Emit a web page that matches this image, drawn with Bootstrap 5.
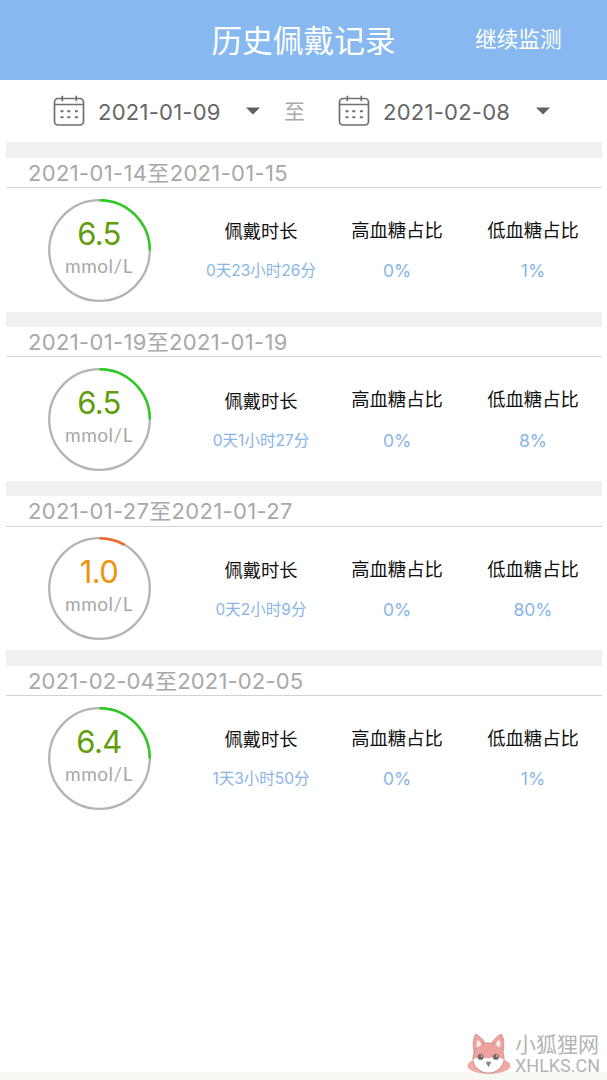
<!DOCTYPE html>
<html lang="zh-CN">
<head>
<meta charset="utf-8">
<meta name="viewport" content="width=device-width, initial-scale=1">
<title>历史佩戴记录</title>
<link href="https://cdn.jsdelivr.net/npm/bootstrap@5.3.0/dist/css/bootstrap.min.css" rel="stylesheet">
<style>
body{font-family:Inter,"Noto Sans CJK SC",sans-serif;background:#fff;min-height:1080px;line-height:1;overflow:hidden}
.topbar{height:80.3px;background:#87b9f0;color:#fff;padding:0}
.topbar h1{font-size:30.7px;line-height:40px;font-weight:400;margin:0;padding-top:1px;white-space:nowrap}
.side{width:211px}
.go-on{font-size:21.7px;line-height:30px;padding-left:79px;margin-top:-3px}
.filter{height:62.2px;color:#666;font-size:22px;padding-left:53px}
.filter svg{flex:none}
.date{line-height:30px;white-space:nowrap;letter-spacing:.25px;padding:2px 0 0 13px}
.to{color:#aaa;font-size:21px;line-height:30px;padding-top:2px}
.records{padding:0 5.5px 0 6px}
.band{height:15.3px;background:#f0f0f0}
.period{height:30.2px;line-height:31px;font-size:22px;color:#a8a8a8;border-bottom:1px solid #d2d2d2;padding-left:22px;white-space:nowrap;letter-spacing:.34px}
.period.wide{letter-spacing:.17px}
.detail{height:123.8px}
.gauge-col{width:187px;padding-left:42px;padding-top:10.8px}
.gauge{width:103px;height:103px}
.gauge svg{display:block}
.reading{top:0;left:0;width:102px;text-align:center}
.num{font-size:31px;line-height:36px;padding-top:17px;color:#619c0b;letter-spacing:-.6px}
.low{color:#ef920f}
.unit{font-size:19px;line-height:24px;margin-top:2px;color:#a8a8a8;font-family:Lato,sans-serif;letter-spacing:.5px}
.stat{width:136px;text-align:center;white-space:nowrap}
.stat dt{font-size:18.3px;line-height:26px;font-weight:400;color:#111;padding-top:29px}
.stat dd{font-size:17.5px;line-height:24px;color:#87b5e8;margin:16.5px 0 0}
.stat.wear dt{padding-top:30.5px}
.stat.wear dd{font-size:15.5px;margin-top:15px}
.foot{height:8px;background:#f7f7f3}
.site{left:467px;bottom:5px;color:#b4b4b4}
.site b{font-weight:400;display:block;white-space:nowrap}
.site-name{font-size:21px;line-height:22px}
.site-url{font-family:Roboto,sans-serif;font-size:18px;line-height:19px}
</style>
</head>
<body class="position-relative d-flex flex-column">
<svg width="0" height="0" class="position-absolute">
  <symbol id="cal" viewBox="0 0 32 32"><g fill="none" stroke="#707070" stroke-width="1.7"><rect x="1.5" y="3.500" width="29" height="26.500" rx="3.500"/><path d="M1.500 9.500h29M9.300.8v5.500M23.300.8v5.500"/><path d="M7.500 16.300h3M14.300 16.300h3M21.900 16.300h3M7.500 22.200h3M14.300 22.200h3M21.900 22.200h3" stroke-width="2"/></g></symbol>
  <symbol id="ring" viewBox="0 0 103 103"><circle cx="51.5" cy="51.5" r="50.3" fill="none" stroke="#b4b4b4" stroke-width="2.3"/></symbol>
</svg>
<header class="topbar navbar flex-nowrap justify-content-between">
  <div class="side flex-shrink-1"></div>
  <h1>历史佩戴记录</h1>
  <div class="side flex-shrink-0"><div class="go-on">继续监测</div></div>
</header>
<div class="filter d-flex align-items-center">
  <svg width="32" height="32"><use href="#cal"/></svg>
  <span class="date" style="width:149px">2021-01-09</span>
  <svg width="14" height="8" style="margin-left:12px"><path d="M0 .5h14L7 7.5z" fill="#606060"/></svg>
  <span class="to" style="width:54px;margin-left:24px">至</span>
  <svg width="32" height="32"><use href="#cal"/></svg>
  <span class="date" style="width:153px">2021-02-08</span>
  <svg width="14" height="8" style="margin-left:13px"><path d="M0 .5h14L7 7.5z" fill="#606060"/></svg>
</div>
<main class="records flex-grow-1">
  <section>
    <div class="band"></div><div class="period">2021-01-14至2021-01-15</div>
    <div class="detail d-flex">
      <div class="gauge-col"><div class="gauge position-relative"><svg width="103" height="103"><use href="#ring"/><path d="M51.5 1.2A50.3 50.3 0 0 1 101.8 51.5" fill="none" stroke="#2ccb22" stroke-width="2.4"/></svg><div class="reading position-absolute"><div class="num">6.5</div><div class="unit">mmol/L</div></div></div></div>
      <dl class="stat wear mb-0"><dt>佩戴时长</dt><dd>0天23小时26分</dd></dl>
      <dl class="stat mb-0"><dt>高血糖占比</dt><dd>0%</dd></dl>
      <dl class="stat mb-0"><dt>低血糖占比</dt><dd>1%</dd></dl>
    </div>
  </section>
  <section>
    <div class="band"></div><div class="period">2021-01-19至2021-01-19</div>
    <div class="detail d-flex">
      <div class="gauge-col"><div class="gauge position-relative"><svg width="103" height="103"><use href="#ring"/><path d="M51.5 1.2A50.3 50.3 0 0 1 101.8 51.5" fill="none" stroke="#2ccb22" stroke-width="2.4"/></svg><div class="reading position-absolute"><div class="num">6.5</div><div class="unit">mmol/L</div></div></div></div>
      <dl class="stat wear mb-0"><dt>佩戴时长</dt><dd>0天1小时27分</dd></dl>
      <dl class="stat mb-0"><dt>高血糖占比</dt><dd>0%</dd></dl>
      <dl class="stat mb-0"><dt>低血糖占比</dt><dd>8%</dd></dl>
    </div>
  </section>
  <section>
    <div class="band"></div><div class="period">2021-01-27至2021-01-27</div>
    <div class="detail d-flex">
      <div class="gauge-col"><div class="gauge position-relative"><svg width="103" height="103"><use href="#ring"/><path d="M51.5 1.2A50.3 50.3 0 0 1 76.6 7.9" fill="none" stroke="#f2692c" stroke-width="2.4"/></svg><div class="reading position-absolute"><div class="num low">1.0</div><div class="unit">mmol/L</div></div></div></div>
      <dl class="stat wear mb-0"><dt>佩戴时长</dt><dd>0天2小时9分</dd></dl>
      <dl class="stat mb-0"><dt>高血糖占比</dt><dd>0%</dd></dl>
      <dl class="stat mb-0"><dt>低血糖占比</dt><dd>80%</dd></dl>
    </div>
  </section>
  <section>
    <div class="band"></div><div class="period wide">2021-02-04至2021-02-05</div>
    <div class="detail d-flex">
      <div class="gauge-col"><div class="gauge position-relative"><svg width="103" height="103"><use href="#ring"/><path d="M51.5 1.2A50.3 50.3 0 0 1 101.8 51.5" fill="none" stroke="#2ccb22" stroke-width="2.4"/></svg><div class="reading position-absolute"><div class="num">6.4</div><div class="unit">mmol/L</div></div></div></div>
      <dl class="stat wear mb-0"><dt>佩戴时长</dt><dd>1天3小时50分</dd></dl>
      <dl class="stat mb-0"><dt>高血糖占比</dt><dd>0%</dd></dl>
      <dl class="stat mb-0"><dt>低血糖占比</dt><dd>1%</dd></dl>
    </div>
  </section>
</main>
<footer class="foot"></footer>
<div class="site position-absolute d-flex align-items-end">
  <svg width="44" height="43" viewBox="0 0 45 44">
    <ellipse cx="22.5" cy="34.5" rx="22" ry="8.5" fill="#f3a9a4"/>
    <g stroke="#a79591" stroke-width=".7"><path d="M7 20C5.500 12 6.500 5 9 2c4 2 8 6 10 10zM37 20c1.500-8 .5-15-2-18-4 2-8 6-10 10z" fill="#f0a29c"/>
    <path d="M6 27C6 17 13 11 22 11s16 6 16 16c0 9-7 15-16 15S6 36 6 27z" fill="#f0a29c"/></g>
    <path d="M10 16c-.5-3 0-7 1-8 2 1 3 3 4 5zM34 16c.5-3 0-7-1-8-2 1-3 3-4 5z" fill="#fbeae7"/>
    <path d="M6.500 28c5-3 11-2 15.500-1 4.500-1 11-2 15.500 1C37 36 30 41.500 22 41.500S7 36 6.500 28z" fill="#fff"/>
    <circle cx="14" cy="25.500" r="3" fill="#74666c"/><circle cx="29.500" cy="25.500" r="3" fill="#74666c"/><circle cx="15" cy="24.500" r=".8" fill="#fff"/><circle cx="30.500" cy="24.500" r=".8" fill="#fff"/>
    <path d="M19 30.500h6L22 36z" fill="#8d8588"/>
  </svg>
  <div style="padding-left:4px"><b class="site-name">小狐狸网</b><b class="site-url">XHLKS.CN</b></div>
</div>
<script src="https://cdn.jsdelivr.net/npm/bootstrap@5.3.0/dist/js/bootstrap.bundle.min.js"></script>
</body>
</html>
